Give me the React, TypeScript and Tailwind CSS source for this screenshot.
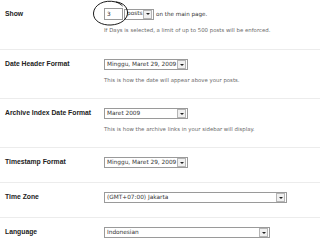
import React from 'react'

const Arrow = () => (
    <span className="flex h-[9px] w-[9px] shrink-0 items-center justify-center border border-[#b5b5b5] bg-[#f0f0f0]">
        <span className="h-0 w-0 border-x-[2px] border-t-[2px] border-x-transparent border-t-[#222]" />
    </span>
)

const Select = ({ value, width }: { value: string; width: string }) => (
    <div className={`flex h-[11px] items-center justify-between border border-[#9a9a9a] bg-white pl-[2px] pr-[1px] ${width}`}>
        <span className="whitespace-nowrap text-[5.8px] leading-none text-[#333]">{value}</span>
        <Arrow />
    </div>
)

const Row = ({ label, children, last }: { label: string; children: React.ReactNode; last?: boolean }) => (
    <div className={`flex pl-[5px] pt-[9px] pb-[14px] ${last ? '' : 'border-b border-[#ececec]'}`}>
        <div className="w-[99px] shrink-0 whitespace-nowrap pt-[1px] font-['Liberation_Sans',Arial,sans-serif] text-[6.8px] font-bold leading-[8px] text-[#222]">{label}</div>
        <div className="flex flex-col">{children}</div>
    </div>
)

const Help = ({ children }: { children: React.ReactNode }) => (
    <p className="mt-[6px] whitespace-nowrap text-[5.4px] leading-[8px] text-[#6a6a6a]">{children}</p>
)

export default function App() {
    return (
        <div className="h-[247px] w-[320px] overflow-hidden bg-white" style={{ fontFamily: '"DejaVu Sans", Verdana, sans-serif' }}>
            <div className="flex border-b border-[#ececec] pl-[5px] pt-[8px] pb-[15px]">
                <div className="w-[99px] shrink-0 pt-[2px] font-['Liberation_Sans',Arial,sans-serif] text-[6.8px] font-bold leading-[8px] text-[#222]">Show</div>
                <div className="flex flex-col">
                    <div className="relative flex items-center gap-[1px]">
                        <div className="flex h-[12px] w-[19px] items-center border border-[#9a9a9a] pl-[2px] text-[5.8px] text-[#333]">3</div>
                        <div className="flex h-[11px] w-[30px] items-center justify-between border border-[#9a9a9a] pl-[2px] pr-[1px]">
                            <span className="text-[5.8px] leading-none text-[#333]">posts</span>
                            <Arrow />
                        </div>
                        <span className="ml-[1px] whitespace-nowrap text-[5.6px] text-[#333]">on the main page.</span>
                        <svg className="absolute left-[-12px] top-[-8px]" width="38" height="27" viewBox="0 0 38 27">
                            <path d="M24 2 C12 -1 2 5 1.5 13 C1 21 10 25.5 19 25 C29 24.5 36 19 35.5 12 C35 6 30 2.5 24 2 C27 3 29 4.5 30.5 6" fill="none" stroke="#000" strokeWidth="0.9" />
                        </svg>
                    </div>
                    <Help>If Days is selected, a limit of up to 500 posts will be enforced.</Help>
                </div>
            </div>
            <Row label="Date Header Format">
                <Select value="Minggu, Maret 29, 2009" width="w-[84px]" />
                <Help>This is how the date will appear above your posts.</Help>
            </Row>
            <Row label="Archive Index Date Format">
                <Select value="Maret 2009" width="w-[84px]" />
                <Help>This is how the archive links in your sidebar will display.</Help>
            </Row>
            <Row label="Timestamp Format">
                <Select value="Minggu, Maret 29, 2009" width="w-[84px]" />
            </Row>
            <Row label="Time Zone">
                <Select value="(GMT+07:00) Jakarta" width="w-[183px]" />
            </Row>
            <Row label="Language" last>
                <Select value="Indonesian" width="w-[166px]" />
            </Row>
        </div>
    )
}
